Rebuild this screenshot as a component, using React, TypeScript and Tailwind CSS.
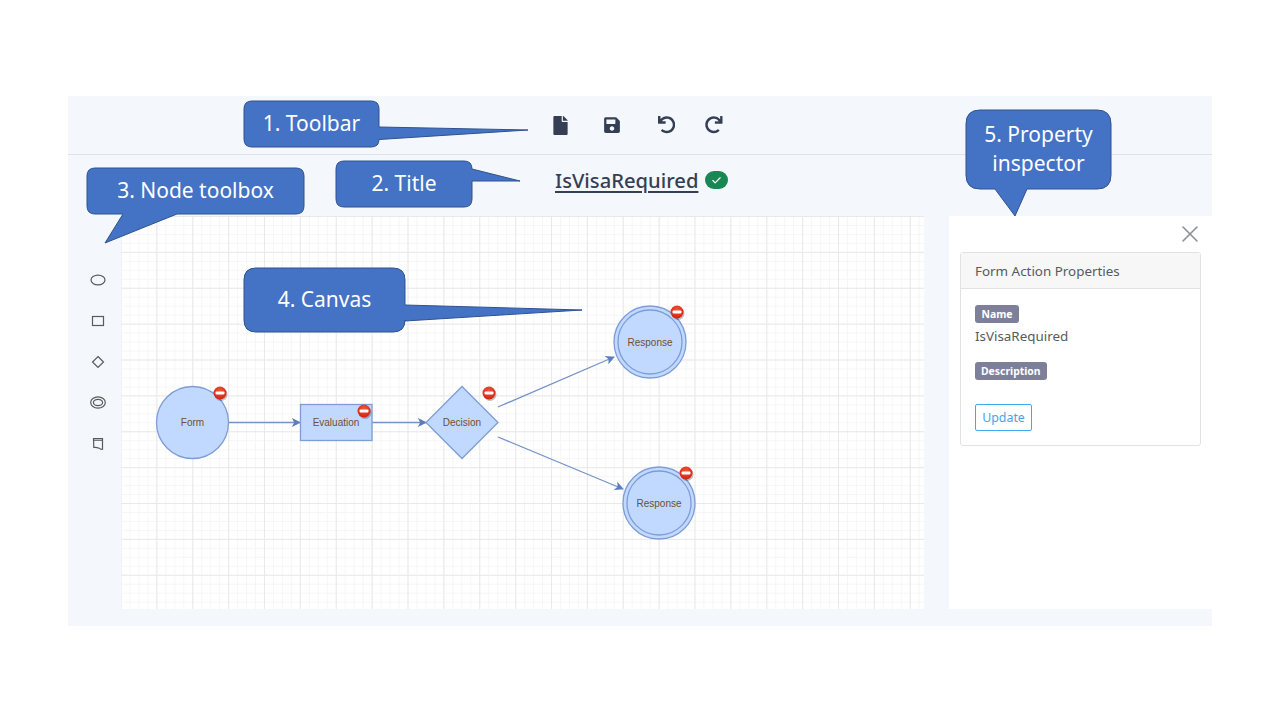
import { FaFile, FaSave, FaUndo, FaRedo } from "react-icons/fa";
import { X, Check } from "lucide-react";

const FONT = "font-['Noto_Sans','Open_Sans',sans-serif]";

/** Red "no entry" marker that the canvas puts on a node with errors */
function ErrorMark({ x, y }: { x: number; y: number }) {
  return (
    <g>
      <circle cx={x + 1} cy={y + 1.5} r={6.5} fill="#00000040" />
      <circle cx={x} cy={y} r={6.5} fill="url(#errorFill)" />
      <rect x={x - 4.5} y={y - 1.5} width={9} height={3} rx={1} fill="#ffffff" />
    </g>
  );
}

function NodeLabel({ x, y, children }: { x: number; y: number; children: string }) {
  return (
    <text
      x={x}
      y={y + 3.5}
      textAnchor="middle"
      fontFamily="'Liberation Sans', sans-serif"
      fontSize={10}
      fill="#6e4f35"
    >
      {children}
    </text>
  );
}

function Edge({ x1, y1, x2, y2 }: { x1: number; y1: number; x2: number; y2: number }) {
  return <line x1={x1} y1={y1} x2={x2} y2={y2} stroke="#7592ca" strokeWidth={1.3} markerEnd="url(#arrow)" />;
}

function Diagram() {
  return (
    <svg viewBox="121 216 803 393" className="block w-full h-full">
      <defs>
        <marker id="arrow" viewBox="0 0 10 10" refX="9" refY="5" markerWidth="9" markerHeight="9" markerUnits="userSpaceOnUse" orient="auto">
          <path d="M0 0L10 5L0 10L2.5 5Z" fill="#5b7ebd" />
        </marker>
        <radialGradient id="errorFill" cx="50%" cy="35%" r="65%">
          <stop offset="0%" stopColor="#f2573a" />
          <stop offset="100%" stopColor="#d3200f" />
        </radialGradient>
      </defs>

      <Edge x1={228} y1={422.5} x2={300} y2={422.5} />
      <Edge x1={372} y1={422.5} x2={426} y2={422.5} />
      <Edge x1={498} y1={407} x2={614} y2={357} />
      <Edge x1={498} y1={437} x2={623} y2={489} />

      <g fill="#c2d9ff" stroke="#7d9dd6" strokeWidth={1.3}>
        <circle cx={192.5} cy={422.5} r={36} />
        <rect x={300.5} y={404.5} width={71.5} height={36} />
        <path d="M462 386.5L498 422.5L462 458.5L426 422.5Z" />
        <circle cx={650} cy={342} r={36} />
        <circle cx={650} cy={342} r={32} />
        <circle cx={659} cy={503} r={36} />
        <circle cx={659} cy={503} r={32} />
      </g>

      <NodeLabel x={192.5} y={422.5}>Form</NodeLabel>
      <ErrorMark x={220} y={393} />
      <NodeLabel x={336} y={422.5}>Evaluation</NodeLabel>
      <ErrorMark x={364} y={411} />
      <NodeLabel x={462} y={422.5}>Decision</NodeLabel>
      <ErrorMark x={489} y={393} />
      <NodeLabel x={650} y={342}>Response</NodeLabel>
      <ErrorMark x={677} y={312} />
      <NodeLabel x={659} y={503}>Response</NodeLabel>
      <ErrorMark x={686} y={473} />
    </svg>
  );
}

function ToolboxIcon({ children }: { children: React.ReactNode }) {
  return (
    <svg width="18" height="18" viewBox="0 0 18 18" fill="none" stroke="#5a5a5a" strokeWidth="1.2">
      {children}
    </svg>
  );
}

function Toolbox() {
  return (
    <div className="w-[53px] pt-[55px] pl-[21px] flex flex-col gap-[23px]">
      <ToolboxIcon><ellipse cx="9" cy="9" rx="7" ry="4.8" /></ToolboxIcon>
      <ToolboxIcon><rect x="3.5" y="4.5" width="11" height="9" /></ToolboxIcon>
      <ToolboxIcon><path d="M9 3.5L14.5 9L9 14.5L3.5 9Z" /></ToolboxIcon>
      <ToolboxIcon>
        <ellipse cx="9" cy="8.5" rx="7.3" ry="5.6" />
        <ellipse cx="9" cy="8.5" rx="4.6" ry="3.1" />
      </ToolboxIcon>
      <ToolboxIcon>
        <path d="M4.5 3.5H13.5V14.2Q11.5 14.6 10.2 13.2Q7 12 4.8 12.5Z" />
        <path d="M4.5 5.2H13.5" />
      </ToolboxIcon>
    </div>
  );
}

function Inspector() {
  return (
    <aside className="flex-1 bg-white pl-[11px] pr-[11.5px] text-[#555b60] text-[13.4px]">
      <div className="h-[36px] flex items-center justify-end">
        <X size={28} strokeWidth={1.4} className="text-[#8b8f96] -mr-[3.5px]" />
      </div>
      <div className="border border-[#e2e2e2] rounded-[3px] h-[194px]">
        <div className="h-[36px] px-[14px] pt-[1px] flex items-center bg-[#f7f7f7] border-b border-[#e2e2e2]">
          Form Action Properties
        </div>
        <div className="px-[14px] pt-[16px]">
          <div className="w-fit h-[18px] px-[6.5px] pt-[1px] rounded-[3px] bg-[#7e7f9a] text-white text-[10.4px] font-bold flex items-center">
            Name
          </div>
          <div className="mt-[2px] leading-[22px]">IsVisaRequired</div>
          <div className="mt-[15px] w-fit h-[18px] px-[6px] pt-[2px] rounded-[3px] bg-[#7e7f9a] text-white text-[10.4px] font-bold flex items-center">
            Description
          </div>
          <button className="mt-[24px] h-[27px] w-[57px] pt-[2px] rounded-[2px] border border-[#3fa9f5] text-[#4aa3e8] text-[12.4px] flex items-center justify-center">
            Update
          </button>
        </div>
      </div>
    </aside>
  );
}

/** The annotation balloons are laid over the app: shape from page coordinates, label as text */
const balloons = [
  { d: "M252 101H371Q379 101 379 109V127L528 130L379 139.5Q379 147 371 147H252Q244 147 244 139V109Q244 101 252 101Z" },
  { d: "M344 161H464Q472 161 472 169L520 181L472 181V199Q472 207 464 207H344Q336 207 336 199V169Q336 161 344 161Z" },
  { d: "M95 168H296Q304 168 304 176V206Q304 214 296 214H177L105 243L123 214H95Q87 214 87 206V176Q87 168 95 168Z" },
  { d: "M256 268H393Q405 268 405 280V305L582 310L405 321V320Q405 332 393 332H256Q244 332 244 320V280Q244 268 256 268Z" },
  { d: "M980 110H1097Q1111 110 1111 124V175Q1111 189 1097 189H1027L1015 216L995 189H980Q966 189 966 175V124Q966 110 980 110Z" },
];

export default function App() {
  return (
    <div className={`relative h-screen w-full bg-white pt-[96px] px-[68px] overflow-hidden ${FONT}`}>
      <div className="h-[530px] bg-[#f4f7fb] flex flex-col">
        {/* Toolbar */}
        <div className="h-[59px] shrink-0 border-b border-[#dfe3e8] flex items-center pl-[483px] text-[#343f56]">
          <div className="w-[52px]"><FaFile size={19} /></div>
          <div className="w-[52px]"><FaSave size={18} /></div>
          <div className="w-[50px] pl-[2.5px]"><FaUndo size={17.5} /></div>
          <FaRedo size={17.5} />
        </div>

        {/* Title */}
        <div className="h-[61px] shrink-0 flex items-center pl-[487px] pb-[10px] gap-[7px]">
          <span className="text-[20.2px] font-medium text-[#343f56] underline underline-offset-[3px] decoration-[2px]">IsVisaRequired</span>
          <span className="h-[18px] w-[23px] -mt-[1px] rounded-[9px] bg-[#198754] flex items-center justify-center">
            <Check size={11} strokeWidth={2.5} className="text-white" />
          </span>
        </div>

        {/* Toolbox, canvas, inspector */}
        <div className="h-[393px] shrink-0 flex">
          <Toolbox />
          <div className="w-[803px] bg-white [background-image:linear-gradient(#e9e9e9_1px,transparent_1px),linear-gradient(to_right,#e9e9e9_1px,transparent_1px),linear-gradient(#f6f6f6_1px,transparent_1px),linear-gradient(to_right,#f6f6f6_1px,transparent_1px)] [background-size:35.88px_35.88px,35.88px_35.88px,8.97px_8.97px,8.97px_8.97px] [background-position:0_0,-0.5px_0,0_0,-0.5px_0]">
            <Diagram />
          </div>
          <div className="w-[25px]" />
          <Inspector />
        </div>
      </div>

      {/* Annotation balloons */}
      <svg className="absolute left-0 top-0 pointer-events-none" width="1280" height="720">
        {balloons.map((b) => (
          <path key={b.d} d={b.d} fill="#4472c4" stroke="#2f528f" strokeWidth="1" />
        ))}
      </svg>
      <div className="absolute left-[244px] top-[101px] w-[135px] h-[46px] flex items-center justify-center text-white text-[21px]">1. Toolbar</div>
      <div className="absolute left-[336px] top-[161px] w-[136px] h-[46px] flex items-center justify-center text-white text-[21px]">2. Title</div>
      <div className="absolute left-[87px] top-[168px] w-[217px] h-[46px] flex items-center justify-center text-white text-[21px]">3. Node toolbox</div>
      <div className="absolute left-[244px] top-[268px] w-[161px] h-[64px] flex items-center justify-center text-white text-[21px]">4. Canvas</div>
      <div className="absolute left-[966px] top-[109px] w-[145px] h-[79px] flex items-center justify-center text-center text-white text-[21px] leading-[29px]">5. Property<br />inspector</div>
    </div>
  );
}
